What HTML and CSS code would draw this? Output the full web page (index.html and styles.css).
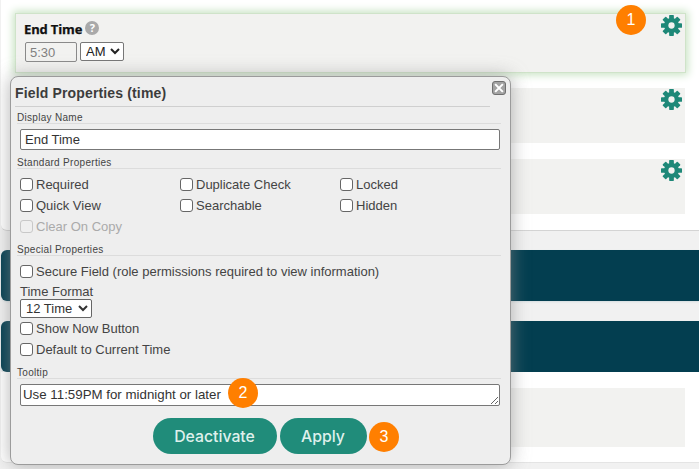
FILE: index.html
```html
<!DOCTYPE html>
<html lang="en">
<head>
<meta charset="utf-8">
<title>Field Properties</title>
<link rel="stylesheet" href="styles.css">
</head>
<body>
<div class="page">
  <section class="panel">
    <div class="row active">
      <div class="field-label">End Time <span class="help">?</span></div>
      <div class="time-controls">
        <input class="time-input" type="text" placeholder="5:30">
        <select class="ampm"><option>AM</option></select>
      </div>
      <svg class="gear" viewBox="0 0 24 24"><use href="#gear"/></svg>
    </div>
    <div class="row plain"><svg class="gear" viewBox="0 0 24 24"><use href="#gear"/></svg></div>
    <div class="row plain"><svg class="gear" viewBox="0 0 24 24"><use href="#gear"/></svg></div>
  </section>
  <div class="bar first"></div>
  <div class="bar second"></div>
  <section class="panel lower"><div class="row tall"></div></section>
</div>

<svg class="defs" width="0" height="0">
  <symbol id="gear" viewBox="0 0 24 24">
    <g fill="#1e8878">
      <rect x="9.300" y="0" width="5.400" height="24" rx=".8"/>
      <rect x="9.300" y="0" width="5.400" height="24" rx=".8" transform="rotate(45 12 12)"/>
      <rect x="9.300" y="0" width="5.400" height="24" rx=".8" transform="rotate(90 12 12)"/>
      <rect x="9.300" y="0" width="5.400" height="24" rx=".8" transform="rotate(135 12 12)"/>
    </g>
    <circle cx="12" cy="12" r="6" fill="none" stroke="#1e8878" stroke-width="5"/>
    <circle cx="12" cy="12" r="3.600" fill="#f2f2f0"/>
  </symbol>
</svg>

<div class="dialog">
  <div class="dialog-title">Field Properties (time)</div>
  <button class="close" aria-label="Close"><svg viewBox="0 0 14 14"><path d="M2.500 2.500l9 9M11.500 2.500l-9 9" stroke="#fff" stroke-width="2.400"/></svg></button>
  <div class="section-title first-title">Display Name</div>
  <input class="text-field" type="text" value="End Time">
  <div class="section-title std">Standard Properties</div>
  <div class="check-grid">
    <label class="check"><input type="checkbox">Required</label>
    <label class="check"><input type="checkbox">Duplicate Check</label>
    <label class="check"><input type="checkbox">Locked</label>
    <label class="check"><input type="checkbox">Quick View</label>
    <label class="check"><input type="checkbox">Searchable</label>
    <label class="check"><input type="checkbox">Hidden</label>
    <label class="check disabled"><input type="checkbox" disabled>Clear On Copy</label>
  </div>
  <div class="section-title special">Special Properties</div>
  <label class="check"><input type="checkbox">Secure Field (role permissions required to view information)</label>
  <div class="format-label">Time Format</div>
  <select class="format"><option>12 Time</option></select>
  <label class="check"><input type="checkbox">Show Now Button</label>
  <label class="check"><input type="checkbox">Default to Current Time</label>
  <div class="section-title tip">Tooltip</div>
  <textarea class="tooltip-area" rows="1">Use 11:59PM for midnight or later</textarea>
  <div class="actions">
    <button class="pill deactivate">Deactivate</button>
    <button class="pill apply">Apply</button>
  </div>
</div>

<span class="badge b1">1</span>
<span class="badge b2">2</span>
<span class="badge b3">3</span>
</body>
</html>
```
FILE: styles.css
```css
* { box-sizing: border-box; }
html, body { margin: 0; padding: 0; }
body {
  width: 699px;
  height: 469px;
  overflow: hidden;
  position: relative;
  background: #f1f1f1;
  font-family: "Liberation Sans", Arial, sans-serif;
}
.defs { position: absolute; }
.page { height: 469px; overflow: hidden; }
.panel {
  background: #fff;
  height: 231px;
  padding: 14px 14px 0 16px;
  border-bottom: 1px solid #d4d4d4;
  margin-left: 1px;
  border-radius: 0 0 0 6px;
}
.row {
  position: relative;
  background: #f2f2f0;
  width: 669px;
  margin-left: -1px;
}
.row.active {
  height: 58px;
  margin-bottom: 16px;
  padding: 7px 8px;
  outline: 1px solid #cfe3c9;
  box-shadow: 0 0 8px 3px #c9e3c4;
}
.row.plain { height: 55px; margin-bottom: 16px; }
.row.plain + .row.plain { margin-bottom: 0; }
.field-label {
  font-family: "Open Sans", sans-serif;
  font-weight: 700;
  font-size: 13px;
  line-height: 15px;
  color: #111;
  letter-spacing: -0.15px;
  -webkit-text-stroke: .25px #111;
}
.help {
  display: inline-block;
  width: 14px;
  height: 14px;
  border-radius: 50%;
  background: #a9a9a9;
  color: #fff;
  font-size: 11px;
  line-height: 14px;
  text-align: center;
  vertical-align: 2px;
  letter-spacing: 0;
  -webkit-text-stroke: 0;
}
.time-controls { display: flex; gap: 3px; margin-top: 5px; margin-left: 1px; }
.time-input {
  width: 52px;
  height: 20px;
  border: 1px solid #8a8a8a;
  border-radius: 2px;
  background: transparent;
  padding: 0 4px;
  font: 13px "Liberation Sans", sans-serif;
}
.time-input::placeholder { color: #808080; opacity: 1; }
.ampm {
  width: 44px;
  height: 19px;
  border: 1px solid #777;
  border-radius: 2px;
  background: #fff;
  font: 13px "Liberation Sans", sans-serif;
  color: #222;
  padding: 0 0 0 1px;
}
.gear { position: absolute; right: 3px; top: 1px; width: 21px; height: 21px; }
.bar {
  height: 51px;
  background: #033e50;
  margin-left: 1px;
  border-radius: 6px 0 0 6px;
  box-shadow: 0 1px 2px #d5dde0;
}
.bar.first { margin-top: 19px; }
.bar.second { margin-top: 20px; }
.lower { height: 91px; padding-top: 16px; border-bottom: 1px solid #e4e4e4; }
.row.tall { height: 59px; }

.dialog {
  position: absolute;
  left: 10px;
  top: 76px;
  width: 501px;
  height: 389px;
  background: #eeeeee;
  border: 1px solid #9b9b9b;
  border-radius: 8px;
  box-shadow: 0 0 18px rgba(140,140,140,.65);
  padding: 0 9px 0 6px;
  color: #444;
  font-size: 13px;
}
.dialog-title {
  font-weight: 700;
  font-size: 14px;
  color: #3c3c3c;
  letter-spacing: .15px;
  height: 30px;
  line-height: 32px;
  margin: 0 -1px 0 -2px;
  width: 475px;
  border-bottom: 1px solid #cfcfcf;
}
.close {
  position: absolute;
  right: 4px;
  top: 4px;
  width: 14px;
  height: 14px;
  padding: 0;
  border: 1px solid #6f6f6f;
  border-radius: 3px;
  background: #a3a3a3;
  display: block;
}
.close svg { display: block; width: 12px; height: 12px; }
.section-title {
  font-size: 10px;
  line-height: 11px;
  color: #444;
  letter-spacing: .3px;
  border-bottom: 1px solid #dcdcdc;
  height: 12px;
}
.first-title { margin-top: 5px; }
.text-field {
  display: block;
  width: 480px;
  height: 21px;
  margin: 5px 0 0 3px;
  border: 1px solid #777;
  border-radius: 2px;
  background: #fff;
  padding: 0 4px;
  font: 13px "Liberation Sans", sans-serif;
  color: #333;
}
.std { margin-top: 7px; }
.check-grid {
  display: grid;
  grid-template-columns: 160px 160px 1fr;
  margin-top: 5px;
}
.check {
  display: flex;
  align-items: center;
  height: 21px;
  padding-left: 3px;
  font-size: 13px;
  color: #444;
  white-space: nowrap;
}
.check input {
  appearance: none;
  width: 13px;
  height: 13px;
  margin: 0 3px 0 0;
  border: 1px solid #666;
  border-radius: 3px;
  background: #fff;
  flex: none;
}
.check.disabled { color: #aaa; }
.check.disabled input { border-color: #c8c8c8; background: #efefef; }
.special { margin-top: 7px; }
.special + .check { margin-top: 5px; }
.format-label {
  margin: 2px 0 0 3px;
  font-size: 13px;
  line-height: 15px;
  color: #444;
}
.format {
  display: block;
  margin-left: 3px;
  width: 72px;
  height: 19px;
  border: 1px solid #666;
  border-radius: 2px;
  background: #fff;
  font: 13px "Liberation Sans", sans-serif;
  color: #333;
  padding: 0 0 0 1px;
}
.tip { margin-top: 7px; }
.tooltip-area {
  display: block;
  width: 480px;
  height: 22px;
  margin: 5px 0 0 3px;
  border: 1px solid #777;
  border-radius: 2px;
  background: #fff;
  padding: 2px;
  font: 13.300px "Liberation Sans", sans-serif;
  color: #333;
  resize: vertical;
  overflow: hidden;
}
.actions {
  display: flex;
  justify-content: center;
  gap: 3px;
  margin: 12px 0 0 1px;
}
.pill {
  height: 36px;
  border: 0;
  border-radius: 18px;
  background: #208c7a;
  color: #dff0ec;
  font-family: Inter, sans-serif;
  font-weight: 500;
  font-size: 15.800px;
  padding: 0;
}
.deactivate { width: 124px; }
.apply { width: 87px; }

.badge {
  position: absolute;
  width: 30px;
  height: 30px;
  border-radius: 50%;
  background: #ff7f00;
  color: #fff;
  font-size: 16px;
  line-height: 30px;
  text-align: center;
}
.b1 { left: 616px; top: 5px; }
.b2 { left: 228px; top: 378px; }
.b3 { left: 369px; top: 422px; }
```
